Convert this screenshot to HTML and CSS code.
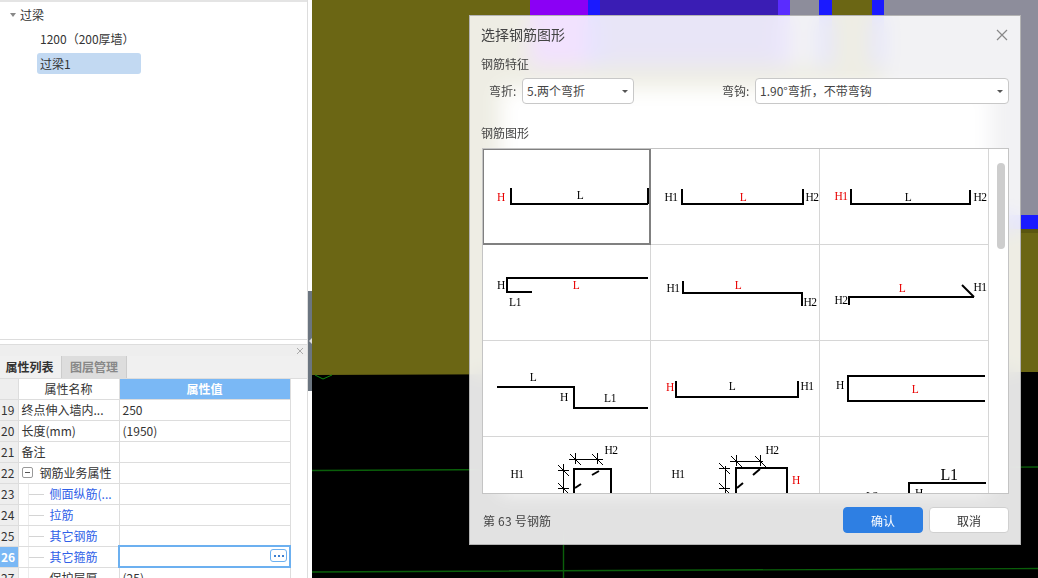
FILE: index.html
```html
<!DOCTYPE html>
<html lang="zh">
<head>
<meta charset="utf-8">
<title>选择钢筋图形</title>
<link rel="stylesheet" href="styles.css">
</head>
<body>
<div class="app">
  <aside class="side">
    <div class="tree">
      <div class="tree-root"><span class="tree-caret"></span><span>过梁</span></div>
      <div class="tree-item">1200（200厚墙）</div>
      <div class="tree-item selected">过梁1</div>
    </div>
    <div class="gap"></div>
    <div class="pane-bar"><svg class="pane-x" viewBox="0 0 8 8"><path d="M1 1L7 7M7 1L1 7"/></svg></div>
    <div class="tabs">
      <div class="tab active">属性列表</div>
      <div class="tab">图层管理</div>
    </div>
    <table class="props">
      <colgroup><col class="c0"><col class="c1"><col class="c2"></colgroup>
      <thead>
        <tr><th class="num"></th><th>属性名称</th><th class="val-head">属性值</th></tr>
      </thead>
      <tbody>
        <tr><td class="num">19</td><td class="name">终点伸入墙内...</td><td class="val">250</td></tr>
        <tr><td class="num">20</td><td class="name">长度(mm)</td><td class="val">(1950)</td></tr>
        <tr><td class="num">21</td><td class="name">备注</td><td class="val"></td></tr>
        <tr><td class="num">22</td><td class="name"><span class="group"><span class="expander"></span>钢筋业务属性</span></td><td class="val"></td></tr>
        <tr><td class="num">23</td><td class="name child link">侧面纵筋(...</td><td class="val"></td></tr>
        <tr><td class="num">24</td><td class="name child link">拉筋</td><td class="val"></td></tr>
        <tr><td class="num">25</td><td class="name child link">其它钢筋</td><td class="val"></td></tr>
        <tr><td class="num current">26</td><td class="name child link">其它箍筋</td><td class="val editing"><span class="more"><i></i><i></i><i></i></span></td></tr>
        <tr><td class="num">27</td><td class="name child">保护层厚</td><td class="val">(25)</td></tr>
      </tbody>
    </table>
  </aside>
  <div class="splitter"><span class="handle"></span></div>
  <main class="canvas">
    <svg class="scene" viewBox="312 0 726 578" preserveAspectRatio="none">
      <rect x="312" y="0" width="726" height="578" fill="#6b6614"/>
      <rect x="530" y="0" width="60" height="66" fill="#8b00f5"/>
      <rect x="588" y="0" width="12" height="66" fill="#1a1aff"/>
      <rect x="600" y="0" width="178" height="66" fill="#3a1db4"/>
      <rect x="778" y="0" width="12" height="66" fill="#5a2cff"/>
      <rect x="790" y="0" width="29" height="66" fill="#8d8d9b"/>
      <rect x="819" y="0" width="13" height="66" fill="#1a1aff"/>
      <rect x="872" y="0" width="12" height="66" fill="#1a1aff"/>
      <rect x="884" y="0" width="154" height="215" fill="#8d8d9b"/>
      <rect x="900" y="215" width="138" height="14" fill="#1a1aff"/>
      <rect x="900" y="229" width="138" height="4" fill="#5a5610"/>
      <polygon points="312,375 1038,372 1038,578 312,578" fill="#000"/>
      <path class="grid-line" d="M312 470.5L1038 467M312 572L1038 568.5M563.5 530V578"/>
      <path class="grid-line thin" d="M315 375L323 379L332 375"/>
    </svg>
  </main>
</div>

<section class="dialog">
  <header class="dlg-title">
    <span>选择钢筋图形</span>
    <svg class="dlg-x" viewBox="0 0 12 12"><path d="M1 1L11 11M11 1L1 11"/></svg>
  </header>
  <div class="dlg-label">钢筋特征</div>
  <div class="filters">
    <label class="f-label f-bend">弯折:</label>
    <div class="select s-bend">5.两个弯折<span class="caret"></span></div>
    <label class="f-label f-hook">弯钩:</label>
    <div class="select s-hook">1.90°弯折，不带弯钩<span class="caret"></span></div>
  </div>
  <div class="dlg-label l-shape">钢筋图形</div>
  <div class="shapes">
    <div class="shape-grid">
      <div class="cell picked"><svg viewBox="483 149 167 95">
        <path d="M511 188V204H648M648 188V204"/>
        <text class="red" x="501" y="201">H</text><text x="580" y="199">L</text></svg></div>
      <div class="cell"><svg viewBox="651 149 168 95">
        <path d="M682 189V204H803V189"/>
        <text x="671" y="201">H1</text><text class="red" x="743" y="201">L</text><text x="812" y="201">H2</text></svg></div>
      <div class="cell"><svg viewBox="820 149 168 95">
        <path d="M851 189V204H970V190"/>
        <text class="red" x="841" y="200">H1</text><text x="908" y="201">L</text><text x="980" y="201">H2</text></svg></div>

      <div class="cell"><svg viewBox="483 245 167 95">
        <path d="M648 278H507V292H532"/>
        <text x="501" y="289">H</text><text class="red" x="576" y="289">L</text><text x="515" y="306">L1</text></svg></div>
      <div class="cell"><svg viewBox="651 245 168 95">
        <path d="M683 281V293H802V306"/>
        <text x="673" y="292">H1</text><text class="red" x="738" y="289">L</text><text x="810" y="306">H2</text></svg></div>
      <div class="cell"><svg viewBox="820 245 168 95">
        <path d="M849 305V297H974"/>
        <path class="slant" d="M974 297L962 285"/>
        <text x="841" y="304">H2</text><text class="red" x="902" y="292">L</text><text x="980" y="291">H1</text></svg></div>

      <div class="cell"><svg viewBox="483 341 167 95">
        <path d="M497 387H574V408H648"/>
        <text x="533" y="381">L</text><text x="564" y="401">H</text><text x="610" y="402">L1</text></svg></div>
      <div class="cell"><svg viewBox="651 341 168 95">
        <path d="M676 381V397H798V381"/>
        <text class="red" x="670" y="391">H</text><text x="732" y="390">L</text><text x="807" y="390">H1</text></svg></div>
      <div class="cell"><svg viewBox="820 341 168 95">
        <path d="M985 376H848V401H985"/>
        <text x="840" y="389">H</text><text class="red" x="915" y="393">L</text></svg></div>

      <div class="cell"><svg viewBox="483 437 167 95">
        <path d="M574 493V469H611V493"/>
        <path class="hook" d="M592 475L599 471M575 488L581 484"/>
        <path class="dim" d="M569 459H603M575 453V464M597 453V464M563 464V493M558 470H569M558 488H569"/>
        <path class="slant-thin" d="M570 454L581 465M592 454L603 465M558 465L569 476M558 483L569 494"/>
        <text x="517" y="478">H1</text><text x="611" y="454">H2</text></svg></div>
      <div class="cell"><svg viewBox="651 437 168 95">
        <path d="M736 493V468H787V493"/>
        <path class="hook" d="M753 475L760 469M737 488L743 483"/>
        <path class="dim" d="M730 461H763M736 455V466M760 455V466M725 466V493M719 468H730M719 488H730"/>
        <path class="slant-thin" d="M731 456L742 467M755 456L766 467M719 463L730 474M719 483L730 494"/>
        <text x="678" y="478">H1</text><text x="772" y="454">H2</text><text class="red" x="796" y="484">H</text></svg></div>
      <div class="cell"><svg viewBox="820 437 168 95">
        <path d="M909 493V483H986"/>
        <text class="big" x="949" y="480">L1</text><text x="872" y="500">L2</text><text x="919" y="497">H</text></svg></div>
    </div>
    <div class="track"><span class="thumb"></span></div>
  </div>
  <footer class="dlg-foot">
    <span class="count">第 63 号钢筋</span>
    <button class="btn primary">确认</button>
    <button class="btn">取消</button>
  </footer>
</section>
</body>
</html>
```
FILE: styles.css
```css
* { box-sizing: border-box; }
html, body { margin: 0; height: 100%; overflow: hidden; }
body {
  font-family: "Noto Sans CJK SC", "Noto Sans", sans-serif;
  font-size: 12px;
  color: #333;
  background: #fff;
}
.app { display: flex; height: 578px; }

/* left side */
.side {
  width: 308px;
  height: 578px;
  display: flex;
  flex-direction: column;
  border-right: 1px solid #ddd;
  background: #fff;
  overflow: hidden;
}
.tree {
  height: 340px;
  flex: none;
  border-top: 2px solid #e4e4e4;
  border-bottom: 1px solid #ddd;
}
.tree-root { height: 25px; display: flex; align-items: center; padding-left: 10px; gap: 4px; }
.tree-caret { width: 0; height: 0; border: 3px solid transparent; border-top: 4px solid #888; border-bottom: 0; }
.tree-item { height: 24px; line-height: 24px; padding-left: 40px; }
.tree-item.selected {
  width: 104px;
  height: 21px;
  line-height: 21px;
  margin: 2px 0 0 37px;
  padding-left: 3px;
  background: #c2d9f2;
  border-radius: 3px;
}
.gap { height: 4px; flex: none; }
.pane-bar {
  height: 12px;
  flex: none;
  background: #eee;
  border-top: 1px solid #ddd;
  display: flex;
  justify-content: flex-end;
  align-items: center;
  padding-right: 3px;
}
.pane-x { width: 8px; height: 8px; }
.pane-x path { stroke: #aaa; stroke-width: 1; fill: none; }
.tabs { height: 23px; flex: none; display: flex; background: #f0f0f0; border-bottom: 1px solid #ddd; }
.tab {
  width: 65px;
  line-height: 21px;
  text-align: center;
  font-weight: 700;
  color: #888;
  background: #ddd;
  border-right: 1px solid #ccc;
}
.tab.active { width: 62px; padding-right: 2px; color: #333; background: #f0f0f0; }

.props { width: 290px; border-collapse: collapse; table-layout: fixed; flex: none; }
.c0 { width: 18px; }
.c1 { width: 101px; }
.c2 { width: 171px; }
.props th, .props td {
  height: 21px;
  padding: 0;
  font-weight: 400;
  border: 1px solid #ddd;
  white-space: nowrap;
  overflow: hidden;
}
.props thead th { height: 20px; border-top: 0; }
.props th:first-child, .props td:first-child { border-left: 0; }
.val-head { background: #7ab8f5; color: #fff; font-weight: 700 !important; }
.props .num { background: #eee; text-align: left; padding-left: 1px; }
.props .num.current { background: #7ab8f5; color: #fff; font-weight: 700; }
.props .name { padding-left: 3px; }
.props .val { padding-left: 3px; }
.group { display: flex; align-items: center; }
.expander {
  width: 11px; height: 11px;
  margin-right: 7px;
  border: 1px solid #999;
  border-radius: 2px;
  position: relative;
  flex: none;
}
.expander::after { content: ""; position: absolute; left: 2px; right: 2px; top: 4px; height: 1px; background: #555; }
.props .child { padding-left: 31px; position: relative; }
.props .child::before { content: ""; position: absolute; left: 9px; top: 10px; width: 16px; height: 1px; background: #d4d4d4; }
.props .child::after { content: ""; position: absolute; left: 9px; top: 0; bottom: 0; width: 1px; background: #ececec; }
.props .link { color: #2f5fe8; }
.props td.editing { position: relative; border: 2px solid #6cb0f0; }
.more {
  position: absolute;
  right: 2px;
  top: 2px;
  width: 17px;
  height: 13px;
  border: 1px solid #6cb0f0;
  border-radius: 3px;
  display: flex;
  justify-content: center;
  align-items: center;
  gap: 2px;
}
.more i { width: 2px; height: 2px; background: #3d7fd0; }

.splitter { width: 4px; flex: none; background: #fff; position: relative; }
.handle { position: absolute; left: 0; top: 291px; width: 4px; height: 100px; background: #6b7580; }
.handle::after {
  content: ""; position: absolute; left: 1px; top: 47px;
  border: 3px solid transparent; border-right: 3px solid #ddd; border-left: 0;
}
.canvas { flex: 1; min-width: 0; height: 578px; background: #000; }
.scene { display: block; width: 100%; height: 100%; }
.grid-line { stroke: #0a5f0a; stroke-width: 1.4; fill: none; }
.thin { stroke: #0f8a0f; stroke-width: 1; }

/* dialog */
.dialog {
  position: absolute;
  left: 469px;
  top: 15px;
  width: 552px;
  height: 530px;
  padding: 0 12px;
  border: 1px solid #b4b4b4;
  background: rgba(255, 255, 255, .885);
  -webkit-backdrop-filter: blur(10px);
  backdrop-filter: blur(10px);
  overflow: hidden;
  color: #444;
}
.dialog::before {
  content: "";
  position: absolute;
  inset: 72px 30px 52px;
  background: #fff;
  filter: blur(10px);
}
.dialog > * { position: relative; }
.dlg-title {
  height: 36px;
  margin-bottom: 2px;
  margin-left: -1px;
  display: flex;
  align-items: center;
  justify-content: space-between;
  font-size: 14px;
}
.dlg-x { width: 12px; height: 12px; margin-top: 2px; }
.dlg-x path { stroke: #888; stroke-width: 1.2; fill: none; }
.dlg-label { height: 20px; line-height: 19px; margin-left: -1px; }
.filters { display: flex; align-items: center; height: 26px; margin: 4px -1px 0 0; }
.f-label { flex: none; width: 28px; margin-right: 5px; white-space: nowrap; line-height: 24px; }
.f-bend { margin-left: 7px; }
.f-hook { margin-left: 88px; }
.select {
  flex: none;
  height: 26px;
  line-height: 23px;
  padding-left: 4px;
  background: #fff;
  border: 1px solid #c8c8c8;
  border-radius: 4px;
  position: relative;
  white-space: nowrap;
}
.s-bend { width: 112px; }
.s-hook { width: 254px; }
.caret {
  position: absolute; right: 5px; top: 11px;
  border: 3px solid transparent; border-top: 3px solid #555; border-bottom: 0;
}
.dlg-label.l-shape { margin-top: 19px; line-height: 20px; }
.shapes {
  margin-top: 5px;
  width: 527px;
  height: 346px;
  background: #fff;
  border: 1px solid #c4c4c4;
  display: flex;
  overflow: hidden;
}
.shape-grid {
  width: 506px;
  height: 344px;
  flex: none;
  display: grid;
  grid-template-columns: 168px 169px 169px;
  grid-auto-rows: 96px;
  overflow: hidden;
}
.cell { border-right: 1px solid #d6d6d6; border-bottom: 1px solid #d6d6d6; position: relative; }
.cell.picked::after {
  content: "";
  position: absolute;
  inset: 0 -1px -1px 0;
  border: solid #808080;
  border-width: 1px 2px 2px 1px;
}
.cell svg { display: block; width: 100%; height: 100%; }
.cell path { fill: none; stroke: #000; stroke-width: 2; shape-rendering: crispEdges; }
.cell path.slant, .cell path.hook { shape-rendering: auto; }
.cell path.dim { stroke-width: 1; }
.cell path.slant-thin { stroke-width: 1; shape-rendering: auto; }
.cell text {
  font-family: "Liberation Serif", serif;
  font-size: 11.5px;
  letter-spacing: -.5px;
  text-anchor: middle;
  fill: #000;
}
.cell text.red { fill: #e80000; }
.cell text.big { font-size: 16px; }
.track { flex: 1; position: relative; background: #fff; }
.thumb { position: absolute; left: 8px; top: 14px; width: 8px; height: 86px; background: #cdcdcd; border-radius: 4px; }
.dlg-foot { display: flex; align-items: center; height: 26px; margin: 13px -1px 0 0; }
.count { flex: 1; padding-left: 1px; letter-spacing: .2px; }
.btn {
  width: 80px;
  height: 26px;
  margin-left: 6px;
  padding: 0;
  font: inherit;
  color: #333;
  background: #fff;
  border: 1px solid #d0d0d0;
  border-radius: 4px;
}
.btn.primary { color: #fff; background: #2e7fe3; border-color: #2e7fe3; }
```
